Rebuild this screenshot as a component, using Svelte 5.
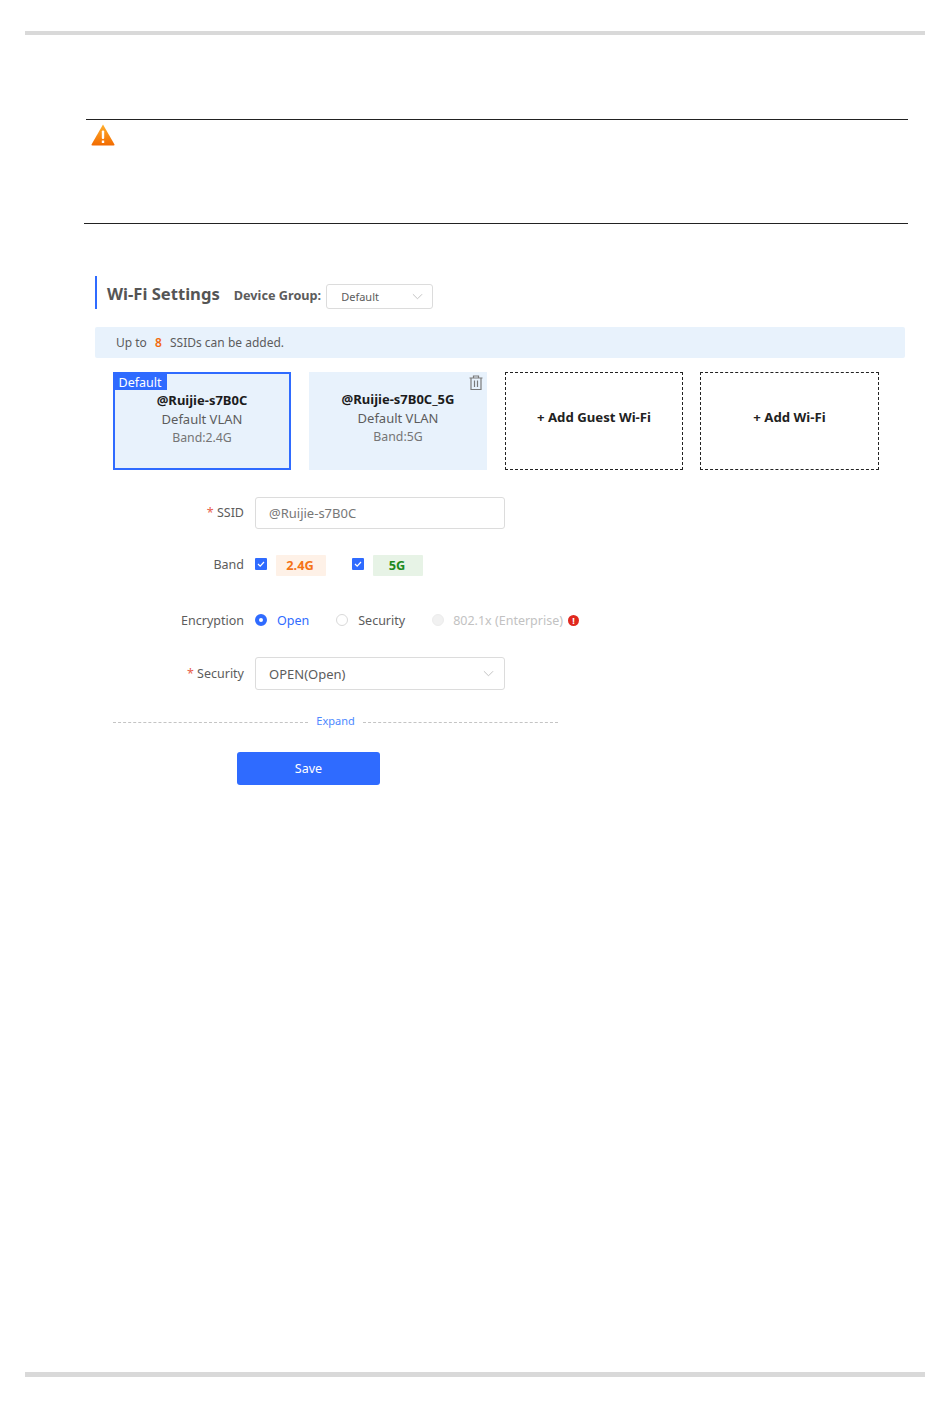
<script lang="ts">
	let bands = [
		{ label: '2.4G', tone: 'orange' },
		{ label: '5G', tone: 'green' }
	];
</script>

<div class="page">
	<div class="edge"></div>

	<div class="note">
		<svg class="warn" viewBox="0 0 24 22" width="24" height="22" aria-hidden="true">
			<defs>
				<linearGradient id="warnFill" x1="0" y1="0" x2="0" y2="1">
					<stop offset="0" stop-color="#ffb02e" />
					<stop offset="1" stop-color="#f26a00" />
				</linearGradient>
			</defs>
			<path d="M12 0.5 L23.5 20.5 Q23.8 21.5 22.5 21.5 L1.5 21.5 Q0.2 21.5 0.5 20.5 Z" fill="url(#warnFill)" />
			<rect x="10.8" y="6.5" width="2.4" height="8.5" rx="1" fill="#fff" />
			<rect x="10.8" y="16.5" width="2.4" height="2.5" fill="#fff" />
		</svg>
	</div>

	<section class="panel">
		<header class="head">
			<h2>Wi-Fi Settings</h2>
			<span class="group-label">Device Group:</span>
			<div class="select small">
				<span>Default</span>
				<svg viewBox="0 0 12 7" width="11" height="7" aria-hidden="true"><path d="M1 1l5 5 5-5" fill="none" stroke="#bdbdbd" /></svg>
			</div>
		</header>

		<div class="info">Up to <b>8</b> SSIDs can be added.</div>

		<div class="cards">
			<div class="card active">
				<span class="tag">Default</span>
				<strong>@Ruijie-s7B0C</strong>
				<span>Default VLAN</span>
				<span class="band-line">Band:2.4G</span>
			</div>
			<div class="card">
				<svg class="trash" viewBox="0 0 14 15" width="14" height="15" aria-hidden="true">
					<path d="M0.5 3h13M4.5 3V1h5v2M2 3v11.5h10V3M5.5 5.5v6.5M8.5 5.5v6.5" fill="none" stroke="#7a7a7a" stroke-width="1.2" />
				</svg>
				<strong>@Ruijie-s7B0C_5G</strong>
				<span>Default VLAN</span>
				<span class="band-line">Band:5G</span>
			</div>
			<div class="card add">+ Add Guest Wi-Fi</div>
			<div class="card add last">+ Add Wi-Fi</div>
		</div>

		<form class="form" onsubmit={(e) => e.preventDefault()}>
			<div class="row ssid">
				<span class="label"><i>*</i> SSID</span>
				<div class="input">@Ruijie-s7B0C</div>
			</div>

			<div class="row band">
				<span class="label">Band</span>
				{#each bands as band}
					<span class="check">
						<svg viewBox="0 0 12 12" width="12" height="12" aria-hidden="true"><path d="M3 6l2.2 2.2L9 4" fill="none" stroke="#fff" stroke-width="1.2" /></svg>
					</span>
					<span class="chip {band.tone}">{band.label}</span>
				{/each}
			</div>

			<div class="row enc">
				<span class="label">Encryption</span>
				<span class="radio on"></span><span class="opt sel">Open</span>
				<span class="radio"></span><span class="opt">Security</span>
				<span class="radio off"></span><span class="opt dim">802.1x (Enterprise)</span>
				<span class="bang">!</span>
			</div>

			<div class="row sec">
				<span class="label"><i>*</i> Security</span>
				<div class="select wide">
					<span>OPEN(Open)</span>
					<svg viewBox="0 0 12 7" width="11" height="7" aria-hidden="true"><path d="M1 1l5 5 5-5" fill="none" stroke="#bdbdbd" /></svg>
				</div>
			</div>

			<div class="expand"><span>Expand</span></div>

			<button class="save" type="submit">Save</button>
		</form>
	</section>

	<div class="edge bottom"></div>
</div>

<style>
	:global(body) {
		margin: 0;
		background: #fff;
	}

	.page {
		width: 950px;
		height: 1408px;
		box-sizing: border-box;
		padding-top: 31px;
		font-family: 'Noto Sans', 'Open Sans', sans-serif;
		color: #5c5c5c;
		font-size: 12.5px;
		overflow: hidden;
	}

	.edge {
		height: 4px;
		margin: 0 25px;
		background: #d9d9d9;
	}

	.edge.bottom {
		height: 5px;
		margin-top: 587px;
	}

	.note {
		position: relative;
		height: 103px;
		margin: 84px 42px 0 86px;
		border-top: 1px solid #222;
		border-bottom: 1px solid #222;
	}

	.note::after {
		content: '';
		position: absolute;
		left: -2px;
		width: 2px;
		bottom: -1px;
		height: 1px;
		background: #222;
	}

	.warn {
		display: block;
		margin: 4px 0 0 5px;
	}

	.panel {
		margin: 52px 45px 0 95px;
	}

	.head {
		display: flex;
		align-items: center;
		height: 33px;
		border-left: 2px solid #2f6bff;
		padding-left: 10px;
	}

	h2 {
		margin: 4px 14px 0 0;
		font-size: 16.6px;
		font-weight: 700;
		color: #555;
		line-height: 1;
	}

	.group-label {
		margin: 4px 5px 0 0;
		font-weight: 700;
		font-size: 12.7px;
	}

	.select {
		display: flex;
		align-items: center;
		justify-content: space-between;
		box-sizing: border-box;
		background: #fff;
		border: 1px solid #dcdcdc;
		border-radius: 3px;
	}

	.select.small {
		width: 107px;
		height: 25px;
		margin-top: 8px;
		padding: 0 9px 0 14px;
		font-size: 11px;
	}

	.info {
		height: 31px;
		margin-top: 18px;
		padding-left: 21px;
		line-height: 31px;
		background: #e8f2fc;
		border-radius: 2px;
		font-size: 12px;
	}

	.info b {
		margin: 0 5px;
		color: #f2690d;
		font-weight: 600;
	}

	.cards {
		display: flex;
		gap: 18px;
		margin: 14px 0 0 18px;
	}

	.card {
		position: relative;
		display: flex;
		flex-direction: column;
		align-items: center;
		box-sizing: border-box;
		width: 178px;
		height: 98px;
		padding-top: 18px;
		background: #e8f2fc;
		font-size: 13px;
		line-height: 18.5px;
	}

	.card strong {
		color: #1c1c1c;
		font-size: 13px;
		font-weight: 700;
	}

	.band-line {
		margin-top: 1px;
		color: #757575;
		font-size: 12.3px;
	}

	.card.active {
		border: 2px solid #2f6bff;
		padding-top: 17px;
	}

	.tag {
		position: absolute;
		top: -2px;
		left: -2px;
		width: 54px;
		height: 18px;
		line-height: 21px;
		text-align: center;
		background: #2f6bff;
		color: #fff;
		font-size: 12.5px;
	}

	.trash {
		position: absolute;
		top: 3px;
		right: 4px;
	}

	.card.add {
		justify-content: center;
		padding: 0 0 8px;
		background: #fff;
		border: 1px dashed #222;
		color: #222;
		font-weight: 700;
		font-size: 13.2px;
	}

	.card.add.last {
		width: 179px;
		margin-left: -1px;
	}

	.form {
		margin: 27px 0 0 18px;
	}

	.row {
		display: flex;
		align-items: center;
	}

	.label {
		width: 131px;
		margin-right: 11px;
		text-align: right;
		font-size: 12.5px;
		flex: none;
	}

	.label i {
		color: #e8604c;
		font-style: normal;
	}

	.ssid {
		height: 32px;
	}

	.ssid .label {
		margin-top: -1px;
	}

	.input {
		box-sizing: border-box;
		width: 250px;
		height: 32px;
		line-height: 31px;
		padding-left: 13px;
		border: 1px solid #dcdcdc;
		border-radius: 3px;
		color: #777;
		font-size: 13px;
	}

	.band {
		height: 21px;
		margin-top: 26px;
	}

	.band .label {
		margin-top: -3px;
	}

	.check {
		display: flex;
		align-items: center;
		justify-content: center;
		width: 12px;
		height: 12px;
		margin-top: -3px;
		border-radius: 1px;
		background: #2f6bff;
		margin-right: 9px;
	}

	.chip {
		box-sizing: border-box;
		width: 50px;
		height: 21px;
		margin-right: 26px;
		padding-right: 2px;
		line-height: 21px;
		text-align: center;
		font-size: 12.8px;
		font-weight: 700;
		border-radius: 1px;
	}

	.chip.orange {
		background: #fef1e7;
		color: #f57316;
	}

	.chip.green {
		background: #e7f3e6;
		color: #1e8a1e;
	}

	.enc {
		height: 20px;
		margin-top: 34px;
	}

	.radio {
		box-sizing: border-box;
		width: 12px;
		height: 12px;
		border-radius: 50%;
		border: 1px solid #d9d9d9;
		margin-right: 10px;
		background: #fff;
		flex: none;
	}

	.radio.on {
		border: 4px solid #2f6bff;
	}

	.radio.off {
		background: #f1f1f1;
		border-color: #ececec;
		margin-left: 1px;
		margin-right: 9px;
	}

	.opt {
		margin-right: 26px;
	}

	.opt.sel {
		color: #2f6bff;
		margin-right: 27px;
	}

	.opt.dim {
		margin-right: 5px;
		color: #c2c2c2;
	}

	.bang {
		width: 11px;
		height: 11px;
		border-radius: 50%;
		background: #e0281e;
		color: #fff;
		font-size: 9px;
		font-weight: 700;
		line-height: 11px;
		text-align: center;
	}

	.sec {
		height: 33px;
		margin-top: 27px;
	}

	.sec .label {
		margin-top: -1px;
	}

	.select.wide {
		width: 250px;
		height: 33px;
		padding: 0 10px 0 13px;
		font-size: 13px;
	}

	.expand {
		display: flex;
		align-items: center;
		width: 445px;
		height: 16px;
		margin-top: 24px;
		color: #4d88ff;
		font-size: 11px;
	}

	.expand::before,
	.expand::after {
		content: '';
		flex: 1;
		border-top: 1px dashed #c4c4c4;
	}

	.expand span {
		margin: -3px 8px 0;
	}

	.save {
		display: block;
		width: 143px;
		height: 33px;
		margin: 22px 0 0 124px;
		border: 0;
		border-radius: 3px;
		background: #2f6bff;
		color: #fff;
		font: inherit;
		font-size: 12.5px;
	}
</style>
